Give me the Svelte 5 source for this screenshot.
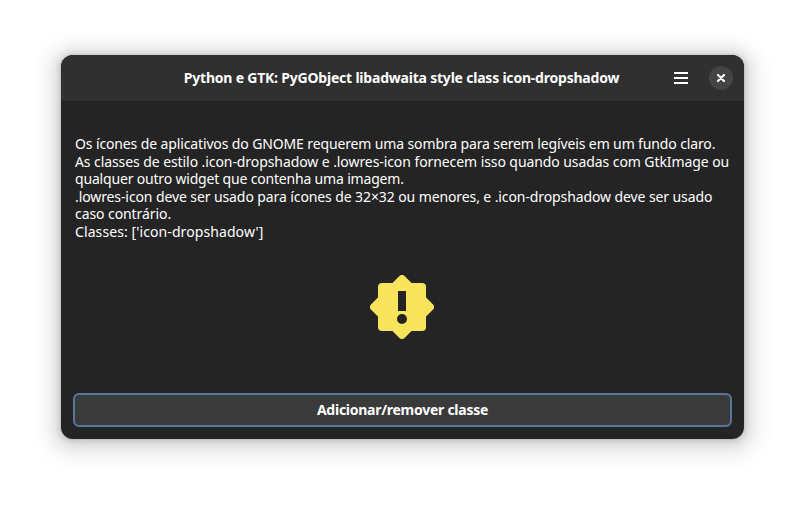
<script>
  const lines = [
    { text: 'Os ícones de aplicativos do GNOME requerem uma sombra para serem legíveis em um fundo claro.', gap: -0.127 },
    { text: 'As classes de estilo .icon-dropshadow e .lowres-icon fornecem isso quando usadas com GtkImage ou', gap: -0.08 },
    { text: 'qualquer outro widget que contenha uma imagem.', gap: -0.18 },
    { text: '.lowres-icon deve ser usado para ícones de 32×32 ou menores, e .icon-dropshadow deve ser usado', gap: -0.1 },
    { text: 'caso contrário.', gap: -0.08 },
    { text: "Classes: ['icon-dropshadow']", gap: 0.09 }
  ];
</script>

<main class="desktop">
  <section class="window">
    <header class="headerbar">
      <h1 class="title">Python e GTK: PyGObject libadwaita style class icon-dropshadow</h1>
      <div class="controls">
        <button class="menu" aria-label="Menu">
          <svg width="14" height="12" viewBox="0 0 14 12"><path d="M0 0h14v2H0zM0 5h14v2H0zM0 10h14v2H0z" fill="#fff" /></svg>
        </button>
        <button class="close" aria-label="Fechar">
          <svg width="8" height="8" viewBox="0 0 8 8"><path d="M1 1l6 6M7 1L1 7" stroke="#fff" stroke-width="2.2" stroke-linecap="round" /></svg>
        </button>
      </div>
    </header>
    <div class="content">
      <p class="description">
        {#each lines as line}
          <span class="line" style="letter-spacing: {line.gap}px">{line.text}</span>
        {/each}
      </p>
      <div class="image">
        <svg width="64" height="64" viewBox="0 0 64 64" fill="#f8e45c">
          <rect x="8" y="8" width="48" height="48" rx="4" />
          <path d="M29.2 1.2a4 4 0 0 1 5.6 0L62.8 29.2a4 4 0 0 1 0 5.6L34.8 62.8a4 4 0 0 1-5.6 0L1.2 34.8a4 4 0 0 1 0-5.6z" />
          <path d="M28 16h8v20h-8z" fill="#242424" />
          <circle cx="32" cy="44" r="5" fill="#242424" />
        </svg>
      </div>
      <button class="action">Adicionar/remover classe</button>
    </div>
  </section>
</main>

<style>
  :global(body) { background: #fff; overflow: hidden; }
  .desktop {
    box-sizing: border-box;
    width: 805px;
    height: 506px;
    padding: 55px 61px 67px;
    font-family: 'Noto Sans', sans-serif;
    color: #fff;
  }
  .window {
    display: flex;
    flex-direction: column;
    width: 683px;
    height: 384px;
    border-radius: 12px;
    overflow: hidden;
    background: #242424;
    box-shadow: 0 1px 5px 2px rgba(0, 0, 0, 0.09), 0 2px 14px 5px rgba(0, 0, 0, 0.1), 0 4px 20px 15px rgba(0, 0, 0, 0.065), 0 0 0 1px rgba(0, 0, 0, 0.05);
  }
  .headerbar {
    box-sizing: border-box;
    height: 47px;
    flex: none;
    display: grid;
    grid-template-columns: 100px 1fr 100px;
    align-items: center;
    background: #303030;
    border-bottom: 1px solid #1f1f1f;
  }
  .title {
    grid-column: 2;
    margin: 0 -59px 0 -61px;
    text-align: center;
    white-space: nowrap;
    font-size: 14px;
    font-weight: 700;
    letter-spacing: -0.21px;
    line-height: 20px;
  }
  .controls { display: flex; align-items: center; justify-content: flex-end; gap: 11px; padding-right: 11px; }
  button { border: 0; padding: 0; color: inherit; font-family: inherit; display: flex; align-items: center; justify-content: center; }
  .menu { width: 34px; height: 34px; background: none; }
  .close { width: 24px; height: 24px; border-radius: 50%; background: #444; }
  .content { flex: 1; display: flex; flex-direction: column; padding: 33px 12px 12px; }
  .description { margin: 0 0 0 2px; display: flex; flex-direction: column; align-items: flex-start; font-size: 14px; line-height: 17.6px; }
  .line { white-space: nowrap; }
  .image { flex: 1; display: flex; justify-content: center; align-items: center; padding: 0 1px 19px 0; }
  .image svg { display: block; }
  .action {
    box-sizing: border-box;
    width: 659px;
    height: 34px;
    padding-bottom: 2px;
    background: #3a3a3a;
    border: 2px solid #56779d;
    border-radius: 6px;
    font-size: 14px;
    font-weight: 700;
    letter-spacing: -0.26px;
  }
</style>
